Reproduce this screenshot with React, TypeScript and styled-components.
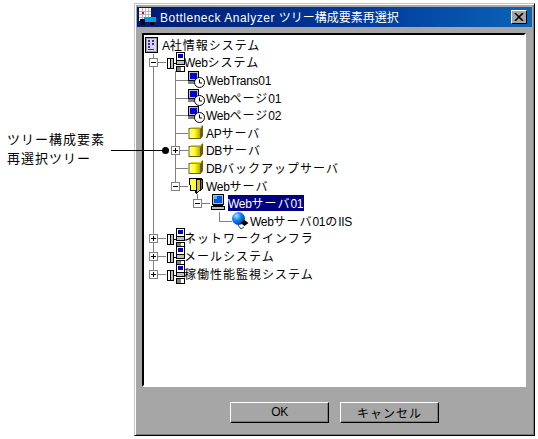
import styled, { createGlobalStyle } from "styled-components";

type GuideKind = "none" | "pipe" | "tee" | "end";

const GlobalStyle = createGlobalStyle`
  html, body {
    margin: 0;
    padding: 0;
    background: #ffffff;
  }
  body {
    width: 538px;
    height: 439px;
    overflow: hidden;
    font-family: "Noto Sans CJK JP", "Liberation Sans", sans-serif;
    font-size: 12px;
    letter-spacing: 1px;
    color: #000000;
  }
`;

const Page = styled.div`
  position: relative;
  display: flex;
  align-items: flex-start;
  width: 538px;
  height: 439px;
`;

const Callout = styled.div`
  width: 134px;
  flex: none;
  padding: 129px 0 0 7px;
  box-sizing: border-box;
  font-size: 13px;
  line-height: 19px;
`;

const Leader = styled.div`
  position: absolute;
  left: 111px;
  top: 150px;
  width: 55px;
  height: 1px;
  background: #000000;

  &::after {
    content: "";
    position: absolute;
    right: -3px;
    top: -3px;
    width: 7px;
    height: 7px;
    border-radius: 50%;
    background: #000000;
  }
`;

const Dialog = styled.div`
  width: 401px;
  height: 433px;
  margin-top: 3px;
  flex: none;
  box-sizing: border-box;
  padding: 3px 2px;
  background: #a6a6a6;
  border: 1px solid;
  border-color: #c4c4c4 #000000 #000000 #c4c4c4;
  box-shadow: inset 1px 1px 0 #ffffff, inset -1px -1px 0 #7c7c7c;
  display: flex;
  flex-direction: column;
`;

const TitleBar = styled.div`
  height: 20px;
  flex: none;
  display: flex;
  align-items: center;
  padding: 0 5px 0 1px;
  background: linear-gradient(90deg, #001a70 0%, #00399a 55%, #0a64b8 100%);
  color: #ffffff;
`;

const TitleText = styled.span`
  flex: 1;
  margin-left: 3px;
  white-space: nowrap;
  line-height: 20px;
  letter-spacing: 0;
`;

const CloseButton = styled.div`
  width: 16px;
  height: 14px;
  box-sizing: border-box;
  background: #a6a6a6;
  border: 1px solid;
  border-color: #ffffff #000000 #000000 #ffffff;
  display: flex;
  align-items: center;
  justify-content: center;
`;

const TreePanel = styled.div`
  width: 384px;
  height: 354px;
  margin: 6px 0 0 5px;
  flex: none;
  box-sizing: border-box;
  padding-top: 1px;
  background: #ffffff;
  border: 2px solid;
  border-color: #000000 #ffffff #ffffff #000000;
  overflow: hidden;
`;

const Row = styled.div`
  height: 17.6px;
  display: flex;
  align-items: center;
  white-space: nowrap;
`;

const Guide = styled.span<{ $kind: GuideKind }>`
  position: relative;
  width: 22px;
  height: 100%;
  flex: none;

  &::before {
    content: "";
    display: ${({ $kind }) => ($kind === "none" ? "none" : "block")};
    position: absolute;
    left: 9px;
    top: 0;
    width: 1px;
    height: ${({ $kind }) => ($kind === "end" ? "50%" : "100%")};
    background: #808080;
  }

  &::after {
    content: "";
    display: ${({ $kind }) =>
      $kind === "tee" || $kind === "end" ? "block" : "none"};
    position: absolute;
    left: 9px;
    top: 50%;
    width: 13px;
    height: 1px;
    background: #808080;
  }
`;

const Expander = styled.span`
  position: absolute;
  z-index: 1;
  left: 5px;
  top: 50%;
  width: 9px;
  height: 9px;
  margin-top: -4px;
  box-sizing: border-box;
  border: 1px solid #808080;
  background: #ffffff;

  &::before {
    content: "";
    position: absolute;
    left: 1px;
    top: 3px;
    width: 5px;
    height: 1px;
    background: #000000;
  }
`;

const ExpanderPlus = styled(Expander)`
  &::after {
    content: "";
    position: absolute;
    left: 3px;
    top: 1px;
    width: 1px;
    height: 5px;
    background: #000000;
  }
`;

const IconSlot = styled.span`
  width: 18px;
  height: 100%;
  flex: none;
  display: flex;
  align-items: center;

  svg {
    display: block;
    flex: none;
    overflow: visible;
    position: relative;
    z-index: 1;
  }
`;

const RootSlot = styled(IconSlot)`
  width: 17px;
  margin-left: 1px;
`;

const Label = styled.span<{ $selected?: boolean }>`
  height: 16px;
  line-height: 16px;
  padding-right: 1px;
  background: ${({ $selected }) => ($selected ? "#000080" : "transparent")};
  color: ${({ $selected }) => ($selected ? "#ffffff" : "#000000")};
`;

const Latin = styled.span`
  font-family: "Liberation Sans", sans-serif;
  font-size: 12px;
  letter-spacing: -0.3px;
`;

const TitleLatin = styled(Latin)`
  letter-spacing: 0.5px;
`;

const ButtonRow = styled.div`
  display: flex;
  justify-content: center;
  gap: 11px;
  margin-top: 15px;
`;

const DialogButton = styled.div`
  width: 99px;
  height: 21px;
  box-sizing: border-box;
  border: 1px solid;
  border-color: #ffffff #000000 #000000 #ffffff;
  box-shadow: inset -1px -1px 0 #7c7c7c;
  display: flex;
  align-items: center;
  justify-content: center;
  line-height: 19px;
`;

function SystemIcon() {
  return (
    <svg width="18" height="20" viewBox="0 0 18 20" shapeRendering="crispEdges">
      <rect x="1.5" y="6.5" width="3" height="10" fill="#ffffff" stroke="#000000" />
      <rect x="4.5" y="6.5" width="3" height="10" fill="#c0c0c0" stroke="#000000" />
      <rect x="8" y="11" width="3" height="1" fill="#000000" />
      <rect x="10.5" y="0.5" width="8" height="8" fill="#ffffff" stroke="#000000" />
      <rect x="12" y="2" width="5" height="4" fill="#0000c0" />
      <rect x="10.5" y="8.5" width="8" height="4" fill="#c0c0c0" stroke="#000000" />
      <rect x="10.5" y="14.5" width="8" height="5" fill="#ffffff" stroke="#000000" />
      <rect x="11" y="15" width="4" height="4" fill="#808080" />
    </svg>
  );
}

function ClockIcon() {
  return (
    <svg width="18" height="18" viewBox="0 0 18 18">
      <g shapeRendering="crispEdges">
        <rect x="0.5" y="0.5" width="10" height="9" fill="#c0c0c0" stroke="#000000" />
        <rect x="2" y="2" width="7" height="6" fill="#0000e0" />
        <rect x="0" y="10" width="10" height="3" fill="#808080" />
      </g>
      <circle cx="11.5" cy="11.5" r="5" fill="#ffffff" stroke="#000000" />
      <path d="M11.5 8.5v3.5h2.5" fill="none" stroke="#000000" />
    </svg>
  );
}

function CubeIcon() {
  return (
    <svg width="16" height="17" viewBox="0 0 16 16">
      <defs>
        <linearGradient id="cubeFill" x1="0" x2="1" y1="0" y2="0">
          <stop offset="0" stopColor="#ffffb0" />
          <stop offset="0.5" stopColor="#ffff20" />
          <stop offset="1" stopColor="#c0a800" />
        </linearGradient>
      </defs>
      <path d="M0.5 3.5h11.5l2-2.5h1v10.5l-2.5 3H0.5z" fill="#6a6000" />
      <path d="M1.5 4.5h10.5v9H1.5z" fill="url(#cubeFill)" />
      <path d="M3 2.5h9.5l1-1v1.5l-1 1H2z" fill="#e8d800" />
    </svg>
  );
}

function OpenFolderIcon() {
  return (
    <svg width="16" height="18" viewBox="0 0 16 18" shapeRendering="crispEdges">
      <path d="M1 1h12l2 2v9l-7 5-1-3H2z" fill="#000000" />
      <path d="M2 2h6v11H3z" fill="#ffff40" />
      <path d="M9 3h3v10l-3 2z" fill="#d8c800" />
      <path d="M13 3h1v8l-1 1z" fill="#807000" />
    </svg>
  );
}

function ComputerIcon() {
  return (
    <svg width="16" height="18" viewBox="0 0 16 18" shapeRendering="crispEdges">
      <rect x="2.5" y="0.5" width="11" height="10" fill="#c0c0c0" stroke="#000000" />
      <rect x="4" y="2" width="8" height="7" fill="#0058e0" />
      <rect x="4" y="2" width="3" height="3" fill="#60b0ff" />
      <rect x="3" y="11" width="10" height="1" fill="#000000" />
      <rect x="1.5" y="12.5" width="13" height="3" fill="#c0c0c0" stroke="#000000" />
    </svg>
  );
}

function SphereIcon() {
  return (
    <svg width="18" height="18" viewBox="0 0 18 18">
      <defs>
        <radialGradient id="sphereFill" cx="0.35" cy="0.3" r="0.8">
          <stop offset="0" stopColor="#b0e0ff" />
          <stop offset="0.45" stopColor="#0a80f0" />
          <stop offset="1" stopColor="#003090" />
        </radialGradient>
      </defs>
      <circle cx="6.5" cy="6.5" r="6.5" fill="url(#sphereFill)" />
      <path d="M12.5 8l4 3-4 3-4-3z" fill="#000000" />
      <path d="M6 13l3 4 3-2" fill="none" stroke="#404040" />
    </svg>
  );
}

function RootIcon() {
  return (
    <svg width="13" height="16" viewBox="0 0 13 16" shapeRendering="crispEdges">
      <rect x="0.5" y="0.5" width="12" height="15" fill="#a0a0a8" stroke="#000000" />
      <rect x="2" y="2" width="9" height="12" fill="#d8d8e8" />
      <path d="M3 3h2v2H3zM7 3h2v2H7zM3 6h2v2H3zM7 6h2v2H7zM3 9h2v2H3zM3 12h6v1H3z" fill="#4020c0" />
    </svg>
  );
}

function WindowIcon() {
  return (
    <svg width="19" height="18" viewBox="0 0 19 18" shapeRendering="crispEdges">
      <rect x="1" y="0" width="12" height="13" fill="#ffffff" />
      <path d="M1 3h12M1 6h12M1 9h12M4 0v13M7 0v13M10 0v13" stroke="#c0b0c0" fill="none" />
      <rect x="4" y="4" width="2" height="2" fill="#e00000" />
      <rect x="6" y="9" width="12" height="5" fill="#00a0e0" />
      <rect x="2" y="11" width="5" height="3" fill="#000060" />
      <rect x="3" y="14" width="4" height="3" fill="#000000" />
      <rect x="12" y="14" width="4" height="3" fill="#000000" />
    </svg>
  );
}

function App() {
  return (
    <>
      <GlobalStyle />
      <Page>
        <Callout>
          ツリー構成要素
          <br />
          再選択ツリー
        </Callout>
        <Dialog>
          <TitleBar>
            <WindowIcon />
            <TitleText>
              <TitleLatin>Bottleneck Analyzer </TitleLatin>ツリー構成要素再選択
            </TitleText>
            <CloseButton>
              <svg width="10" height="8" viewBox="0 0 10 8">
                <path d="M1 0l8 8M9 0L1 8" stroke="#000000" strokeWidth="1.6" />
              </svg>
            </CloseButton>
          </TitleBar>
          <TreePanel>
            <Row>
              <RootSlot><RootIcon /></RootSlot>
              <Label><Latin>A</Latin>社情報システム</Label>
            </Row>
            <Row>
              <Guide $kind="tee"><Expander /></Guide>
              <IconSlot><SystemIcon /></IconSlot>
              <Label><Latin>Web</Latin>システム</Label>
            </Row>
            <Row>
              <Guide $kind="pipe" />
              <Guide $kind="tee" />
              <IconSlot><ClockIcon /></IconSlot>
              <Label><Latin>WebTrans01</Latin></Label>
            </Row>
            <Row>
              <Guide $kind="pipe" />
              <Guide $kind="tee" />
              <IconSlot><ClockIcon /></IconSlot>
              <Label><Latin>Web</Latin>ページ<Latin>01</Latin></Label>
            </Row>
            <Row>
              <Guide $kind="pipe" />
              <Guide $kind="tee" />
              <IconSlot><ClockIcon /></IconSlot>
              <Label><Latin>Web</Latin>ページ<Latin>02</Latin></Label>
            </Row>
            <Row>
              <Guide $kind="pipe" />
              <Guide $kind="tee" />
              <IconSlot><CubeIcon /></IconSlot>
              <Label><Latin>AP</Latin>サーバ</Label>
            </Row>
            <Row>
              <Guide $kind="pipe" />
              <Guide $kind="tee"><ExpanderPlus /></Guide>
              <IconSlot><CubeIcon /></IconSlot>
              <Label><Latin>DB</Latin>サーバ</Label>
            </Row>
            <Row>
              <Guide $kind="pipe" />
              <Guide $kind="tee" />
              <IconSlot><CubeIcon /></IconSlot>
              <Label><Latin>DB</Latin>バックアップサーバ</Label>
            </Row>
            <Row>
              <Guide $kind="pipe" />
              <Guide $kind="end"><Expander /></Guide>
              <IconSlot><OpenFolderIcon /></IconSlot>
              <Label><Latin>Web</Latin>サーバ</Label>
            </Row>
            <Row>
              <Guide $kind="pipe" />
              <Guide $kind="none" />
              <Guide $kind="end"><Expander /></Guide>
              <IconSlot><ComputerIcon /></IconSlot>
              <Label $selected><Latin>Web</Latin>サーバ<Latin>01</Latin></Label>
            </Row>
            <Row>
              <Guide $kind="pipe" />
              <Guide $kind="none" />
              <Guide $kind="none" />
              <Guide $kind="end" />
              <IconSlot><SphereIcon /></IconSlot>
              <Label><Latin>Web</Latin>サーバ<Latin>01</Latin>の<Latin>IIS</Latin></Label>
            </Row>
            <Row>
              <Guide $kind="tee"><ExpanderPlus /></Guide>
              <IconSlot><SystemIcon /></IconSlot>
              <Label>ネットワークインフラ</Label>
            </Row>
            <Row>
              <Guide $kind="tee"><ExpanderPlus /></Guide>
              <IconSlot><SystemIcon /></IconSlot>
              <Label>メールシステム</Label>
            </Row>
            <Row>
              <Guide $kind="end"><ExpanderPlus /></Guide>
              <IconSlot><SystemIcon /></IconSlot>
              <Label>稼働性能監視システム</Label>
            </Row>
          </TreePanel>
          <ButtonRow>
            <DialogButton><Latin>OK</Latin></DialogButton>
            <DialogButton>キャンセル</DialogButton>
          </ButtonRow>
        </Dialog>
        <Leader />
      </Page>
    </>
  );
}

export default App;
